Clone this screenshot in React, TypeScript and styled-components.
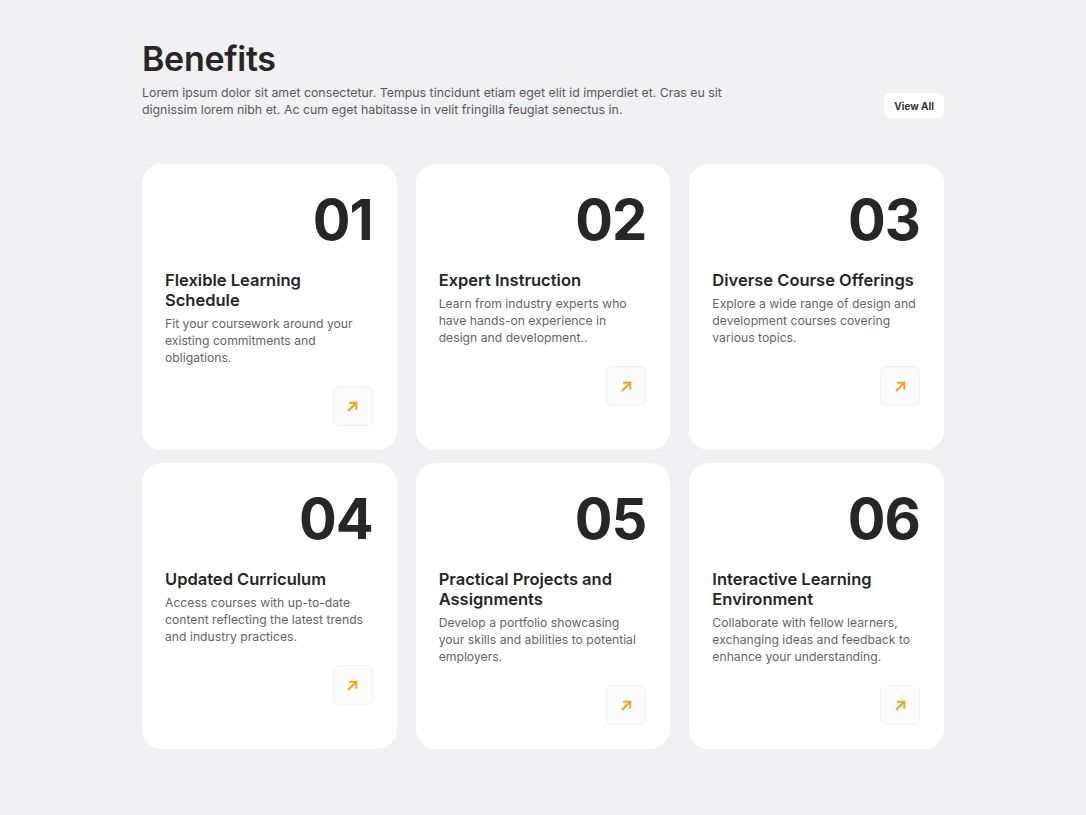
import React from "react";
import styled, { createGlobalStyle } from "styled-components";

const GlobalStyle = createGlobalStyle`
  html, body { margin: 0; padding: 0; background: #f1f1f3; }
  body { font-family: Inter, "Noto Sans", sans-serif; color: #262626; }
  * { box-sizing: border-box; }
`;

const Page = styled.main`
  width: 802px;
  margin: 0 auto;
  padding: 40px 0 60px;
`;

const Header = styled.header`
  display: flex;
  align-items: flex-end;
  justify-content: space-between;
  margin-bottom: 46px;
`;

const HeaderText = styled.div`
  max-width: 600px;
`;

const Title = styled.h1`
  margin: 0 0 6px;
  font-size: 34px;
  font-weight: 600;
  line-height: 38px;
  color: #262626;
  letter-spacing: -0.3px;
`;

const Lead = styled.p`
  margin: 0;
  font-size: 12.35px;
  line-height: 17px;
  color: #59595a;
`;

const ViewAll = styled.button`
  height: 25px;
  padding: 0 10px;
  border: none;
  border-radius: 6px;
  background: #ffffff;
  font-family: inherit;
  font-size: 10px;
  font-weight: 700;
  color: #333;
  margin-bottom: 0;
  cursor: pointer;
`;

const Grid = styled.section`
  display: grid;
  grid-template-columns: repeat(3, 1fr);
  column-gap: 19px;
  row-gap: 13px;
`;

const Card = styled.article`
  background: #ffffff;
  border-radius: 20px;
  padding: 24px 24px 24px 23px;
  display: flex;
  flex-direction: column;
`;

const Number = styled.div`
  align-self: flex-end;
  font-size: 56px;
  font-weight: 700;
  line-height: 64px;
  color: #262626;
  letter-spacing: -1px;
  margin-bottom: 18px;
`;

const CardTitle = styled.h3`
  margin: 0 0 5px;
  font-size: 16.5px;
  font-weight: 600;
  line-height: 20px;
  color: #262626;
`;

const CardText = styled.p`
  margin: 0;
  font-size: 12.2px;
  line-height: 17px;
  color: #656567;
`;

const ArrowButton = styled.button`
  align-self: flex-end;
  margin-top: 20px;
  width: 40px;
  height: 40px;
  border-radius: 6px;
  border: 1px solid #f1f1f1;
  background: #fbfbfb;
  display: flex;
  align-items: center;
  justify-content: center;
  padding: 0;
  cursor: pointer;
`;

const ArrowIcon = () => (
  <svg width="13" height="13" viewBox="0 0 12 12" fill="none">
    <path d="M2.5 9.5 L9.5 2.5 M3.8 2.5 H9.5 V8.2" stroke="#f7a21b" strokeWidth="1.8" strokeLinecap="square" />
  </svg>
);

const benefits = [
  { n: "01", title: "Flexible Learning Schedule", text: "Fit your coursework around your existing commitments and obligations." },
  { n: "02", title: "Expert Instruction", text: "Learn from industry experts who have hands-on experience in design and development.." },
  { n: "03", title: "Diverse Course Offerings", text: "Explore a wide range of design and development courses covering various topics." },
  { n: "04", title: "Updated Curriculum", text: "Access courses with up-to-date content reflecting the latest trends and industry practices." },
  { n: "05", title: "Practical Projects and Assignments", text: "Develop a portfolio showcasing your skills and abilities to potential employers." },
  { n: "06", title: "Interactive Learning Environment", text: "Collaborate with fellow learners, exchanging ideas and feedback to enhance your understanding." },
];

export default function App() {
  return (
    <>
      <GlobalStyle />
      <Page>
        <Header>
          <HeaderText>
            <Title>Benefits</Title>
            <Lead>
              Lorem ipsum dolor sit amet consectetur. Tempus tincidunt etiam eget elit id imperdiet et. Cras eu sit
              dignissim lorem nibh et. Ac cum eget habitasse in velit fringilla feugiat senectus in.
            </Lead>
          </HeaderText>
          <ViewAll>View All</ViewAll>
        </Header>
        <Grid>
          {benefits.map((b) => (
            <Card key={b.n}>
              <Number>{b.n}</Number>
              <CardTitle>{b.title}</CardTitle>
              <CardText>{b.text}</CardText>
              <ArrowButton aria-label="Open">
                <ArrowIcon />
              </ArrowButton>
            </Card>
          ))}
        </Grid>
      </Page>
    </>
  );
}
